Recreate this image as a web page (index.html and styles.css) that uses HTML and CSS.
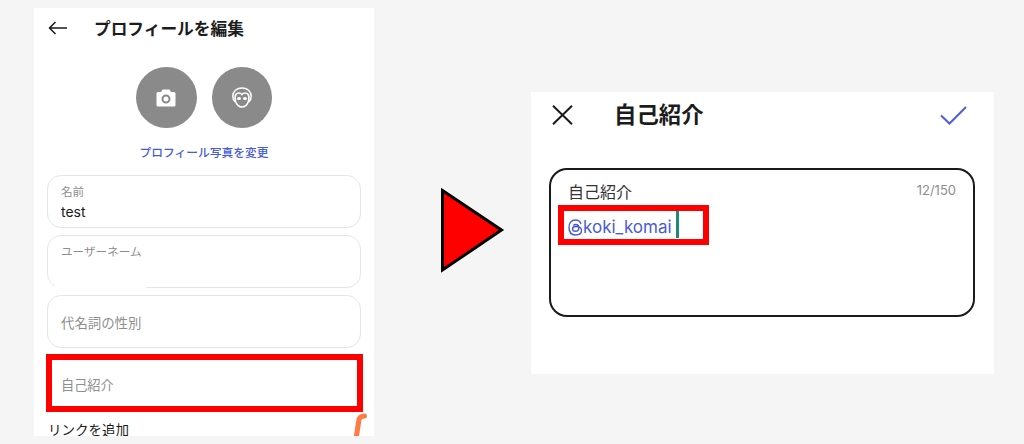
FILE: index.html
```html
<!DOCTYPE html>
<html lang="ja">
<head>
<meta charset="utf-8">
<title>プロフィールを編集</title>
<link rel="stylesheet" href="styles.css">
</head>
<body>
<main class="page">
  <section class="phone edit">
    <header class="edit-head">
      <svg class="back" width="20" height="14" viewBox="0 0 20 14"><path d="M19 7H1.500M7.500 1 1.500 7l6 6" fill="none" stroke="#1a1a1a" stroke-width="1.500"/></svg>
      <h1 class="edit-title">プロフィールを編集</h1>
    </header>
    <div class="avatars">
      <div class="avatar">
        <svg width="20" height="18" viewBox="0 0 20 18"><path fill-rule="evenodd" fill="#fff" d="M6.500 0.500h7L15 3h3a1.500 1.500 0 0 1 1.500 1.500v11.500a1.500 1.500 0 0 1-1.500 1.500H2A1.500 1.500 0 0 1 .5 16V4.500A1.500 1.500 0 0 1 2 3h3ZM10 5.500a4.500 4.500 0 1 0 0 9 4.500 4.500 0 0 0 0-9Zm0 2a2.500 2.500 0 1 1 0 5 2.500 2.500 0 0 1 0-5Z"/></svg>
      </div>
      <div class="avatar">
        <svg width="20" height="21" viewBox="0 0 20 21" fill="none" stroke="#fff" stroke-width="1.500"><path d="M3.200 15C1.500 13.500 .8 11.500 .8 9.300.8 4.300 4.800 1 10 1s9.200 3.300 9.200 8.300c0 2.200-.7 4.200-2.400 5.700"/><path d="M10 7.500C8.500 5.500 5.500 5.500 4 7.300 2.800 9 2.800 11.500 3.500 14c1 3.500 3.500 6 6.500 6s5.500-2.500 6.500-6c.7-2.500.7-5-.5-6.700C14.500 5.500 11.500 5.500 10 7.500Z"/><ellipse cx="7" cy="11.500" rx="2" ry="1.500" fill="#fff" stroke="none"/><ellipse cx="13" cy="11.500" rx="2" ry="1.500" fill="#fff" stroke="none"/></svg>
      </div>
    </div>
    <p class="change-photo">プロフィール写真を変更</p>
    <div class="fields">
      <div class="field">
        <span class="field-label">名前</span>
        <span class="field-value">test</span>
      </div>
      <div class="field">
        <span class="field-label">ユーザーネーム</span>
        <span class="field-patch"></span>
      </div>
      <div class="field field-empty">代名詞の性別</div>
      <div class="field field-empty field-plain">自己紹介<span class="mark mark-bio"></span></div>
    </div>
    <p class="add-link">リンクを追加</p>
    <svg class="scribble" width="14" height="23" viewBox="0 0 14 23"><path d="M3 26 6 6.500Q6.500 3.500 11.500 3" fill="none" stroke="#ff7a45" stroke-width="5" stroke-linecap="round"/></svg>
  </section>

  <svg class="arrow" width="66" height="88" viewBox="0 0 66 88"><path d="M2.500 3.500 61.500 43 2.500 83Z" fill="#ff0000" stroke="#000" stroke-width="3"/></svg>

  <section class="phone bio">
    <header class="bio-head">
      <svg class="close" width="21" height="20" viewBox="0 0 21 20"><path d="M1 .8l19 18.400M20 .8 1 19.200" stroke="#1a1a1a" stroke-width="2" fill="none"/></svg>
      <h2 class="bio-title">自己紹介</h2>
      <svg class="check" width="27" height="19" viewBox="0 0 27 19"><path d="M1 9.500 9.500 17.500 26 1" fill="none" stroke="#4f5fd8" stroke-width="2"/></svg>
    </header>
    <div class="bio-box">
      <div class="bio-row">
        <span class="bio-label">自己紹介</span>
        <span class="bio-count">12/150</span>
      </div>
      <div class="bio-text">
        <span class="bio-handle"><svg class="threads" width="15" height="17" viewBox="0 0 15 17" fill="none" stroke="#4a5bd6" stroke-width="1.400"><path d="M13 5C12.200 2.300 10.200 1 7.500 1 3.500 1 1 3.800 1 8.500S3.500 16 7.500 16c3.500 0 6-1.800 6-4.500 0-2.800-2.500-4-5.500-4-2 0-3.500 1-3.500 2.500 0 1.400 1.200 2.300 3 2.300 2 0 3.300-1.300 3.300-3.500 0-2-1-3.300-3-3.300-1.200 0-2 .4-2.500 1.100"/></svg><span>koki_komai</span></span><span class="caret"></span>
        <span class="mark mark-text"></span>
      </div>
    </div>
  </section>
</main>
</body>
</html>
```
FILE: styles.css
```css
* {
  box-sizing: border-box;
}

html,
body {
  margin: 0;
  height: 444px;
  overflow: hidden;
  background: #f5f5f5;
}

body {
  font-family: Inter, "Noto Sans CJK JP", sans-serif;
  color: #1a1a1a;
}

h1,
h2,
p {
  margin: 0;
}

.page {
  display: flex;
  align-items: flex-start;
  padding: 8px 30px 8px 34px;
}

.phone {
  background: #fff;
  position: relative;
}

/* Left screen */
.edit {
  width: 340px;
  height: 428px;
  padding: 0 13px;
  overflow: hidden;
  flex: none;
}

.edit-head {
  display: flex;
  align-items: center;
  height: 42px;
}

.back {
  flex: none;
  margin: -2px 0 0 1px;
}

.edit-title {
  margin-left: 26px;
  font-size: 16.700px;
  line-height: 42px;
  font-weight: 700;
  color: #1c1c1c;
}

.avatars {
  display: flex;
  justify-content: center;
  gap: 15px;
  margin-top: 17px;
}

.avatar {
  width: 60.500px;
  height: 61px;
  border-radius: 50%;
  background: #8a8a8a;
  display: flex;
  align-items: center;
  justify-content: center;
}

.change-photo {
  margin-top: 15px;
  font-size: 11.750px;
  line-height: 20px;
  font-weight: 500;
  text-align: center;
  color: #4a5bd6;
}

.fields {
  display: flex;
  flex-direction: column;
  gap: 7px;
  margin-top: 12px;
  width: 314px;
}

.field {
  position: relative;
  height: 53px;
  border: 1px solid #e6e6e6;
  border-radius: 14px;
  padding: 9px 13px 0;
  display: flex;
  flex-direction: column;
}

.field-label {
  font-size: 11.600px;
  line-height: 15px;
  color: #8e8e8e;
}

.field-value {
  font-size: 14px;
  line-height: 20px;
  margin-top: 2px;
}

.field-patch {
  position: absolute;
  left: 2px;
  bottom: -1px;
  width: 96px;
  height: 2px;
  background: #fff;
}

.field-empty {
  justify-content: center;
  padding-top: 0;
  font-size: 13.400px;
  color: #8e8e8e;
}

.field-plain {
  border-color: transparent;
  height: 52px;
  padding-top: 6px;
  font-size: 13.200px;
}

.mark {
  position: absolute;
  border: 6px solid #ff0000;
}

.mark-bio {
  left: -2px;
  right: -3px;
  top: -2px;
  bottom: -6px;
}

.add-link {
  margin-top: 13px;
  margin-left: 1px;
  font-size: 13.500px;
  line-height: 20px;
  color: #1a1a1a;
}

.scribble {
  position: absolute;
  right: 7px;
  bottom: 0;
}

/* Arrow */
.arrow {
  flex: none;
  margin: 179px 25px 0 66px;
}

/* Right screen */
.bio {
  width: 463px;
  height: 282px;
  margin-top: 84px;
  padding: 0 19px;
  flex: none;
}

.bio-head {
  display: flex;
  align-items: center;
  height: 46px;
}

.close {
  margin-left: 2px;
  flex: none;
}

.bio-title {
  margin-left: 41px;
  font-size: 22.400px;
  line-height: 46px;
  font-weight: 700;
  color: #1c1c1c;
}

.check {
  margin-left: auto;
  margin-right: 8px;
  flex: none;
}

.bio-box {
  margin-top: 30px;
  margin-left: -1px;
  width: 426px;
  height: 149px;
  border: 2.500px solid #1a1a1a;
  border-radius: 18px;
  padding: 0 17px;
}

.bio-row {
  display: flex;
  justify-content: space-between;
  align-items: center;
  height: 42px;
  padding-top: 2px;
}

.bio-label {
  font-size: 16px;
  line-height: 24px;
  color: #333;
}

.bio-count {
  font-size: 13px;
  line-height: 20px;
  color: #8e8e8e;
  margin-top: -4px;
}

.bio-text {
  position: relative;
  display: flex;
  align-items: center;
  height: 27px;
  margin-top: -1px;
  font-size: 17px;
  line-height: 27px;
  color: #4a5bd6;
}

.bio-handle {
  display: flex;
  align-items: center;
  padding-top: 5px;
}

.threads {
  flex: none;
}

.caret {
  width: 3px;
  height: 27px;
  background: #1f8a78;
  margin-left: 4px;
}

.mark-text {
  left: -10px;
  top: -6px;
  width: 151px;
  height: 40px;
}
```
